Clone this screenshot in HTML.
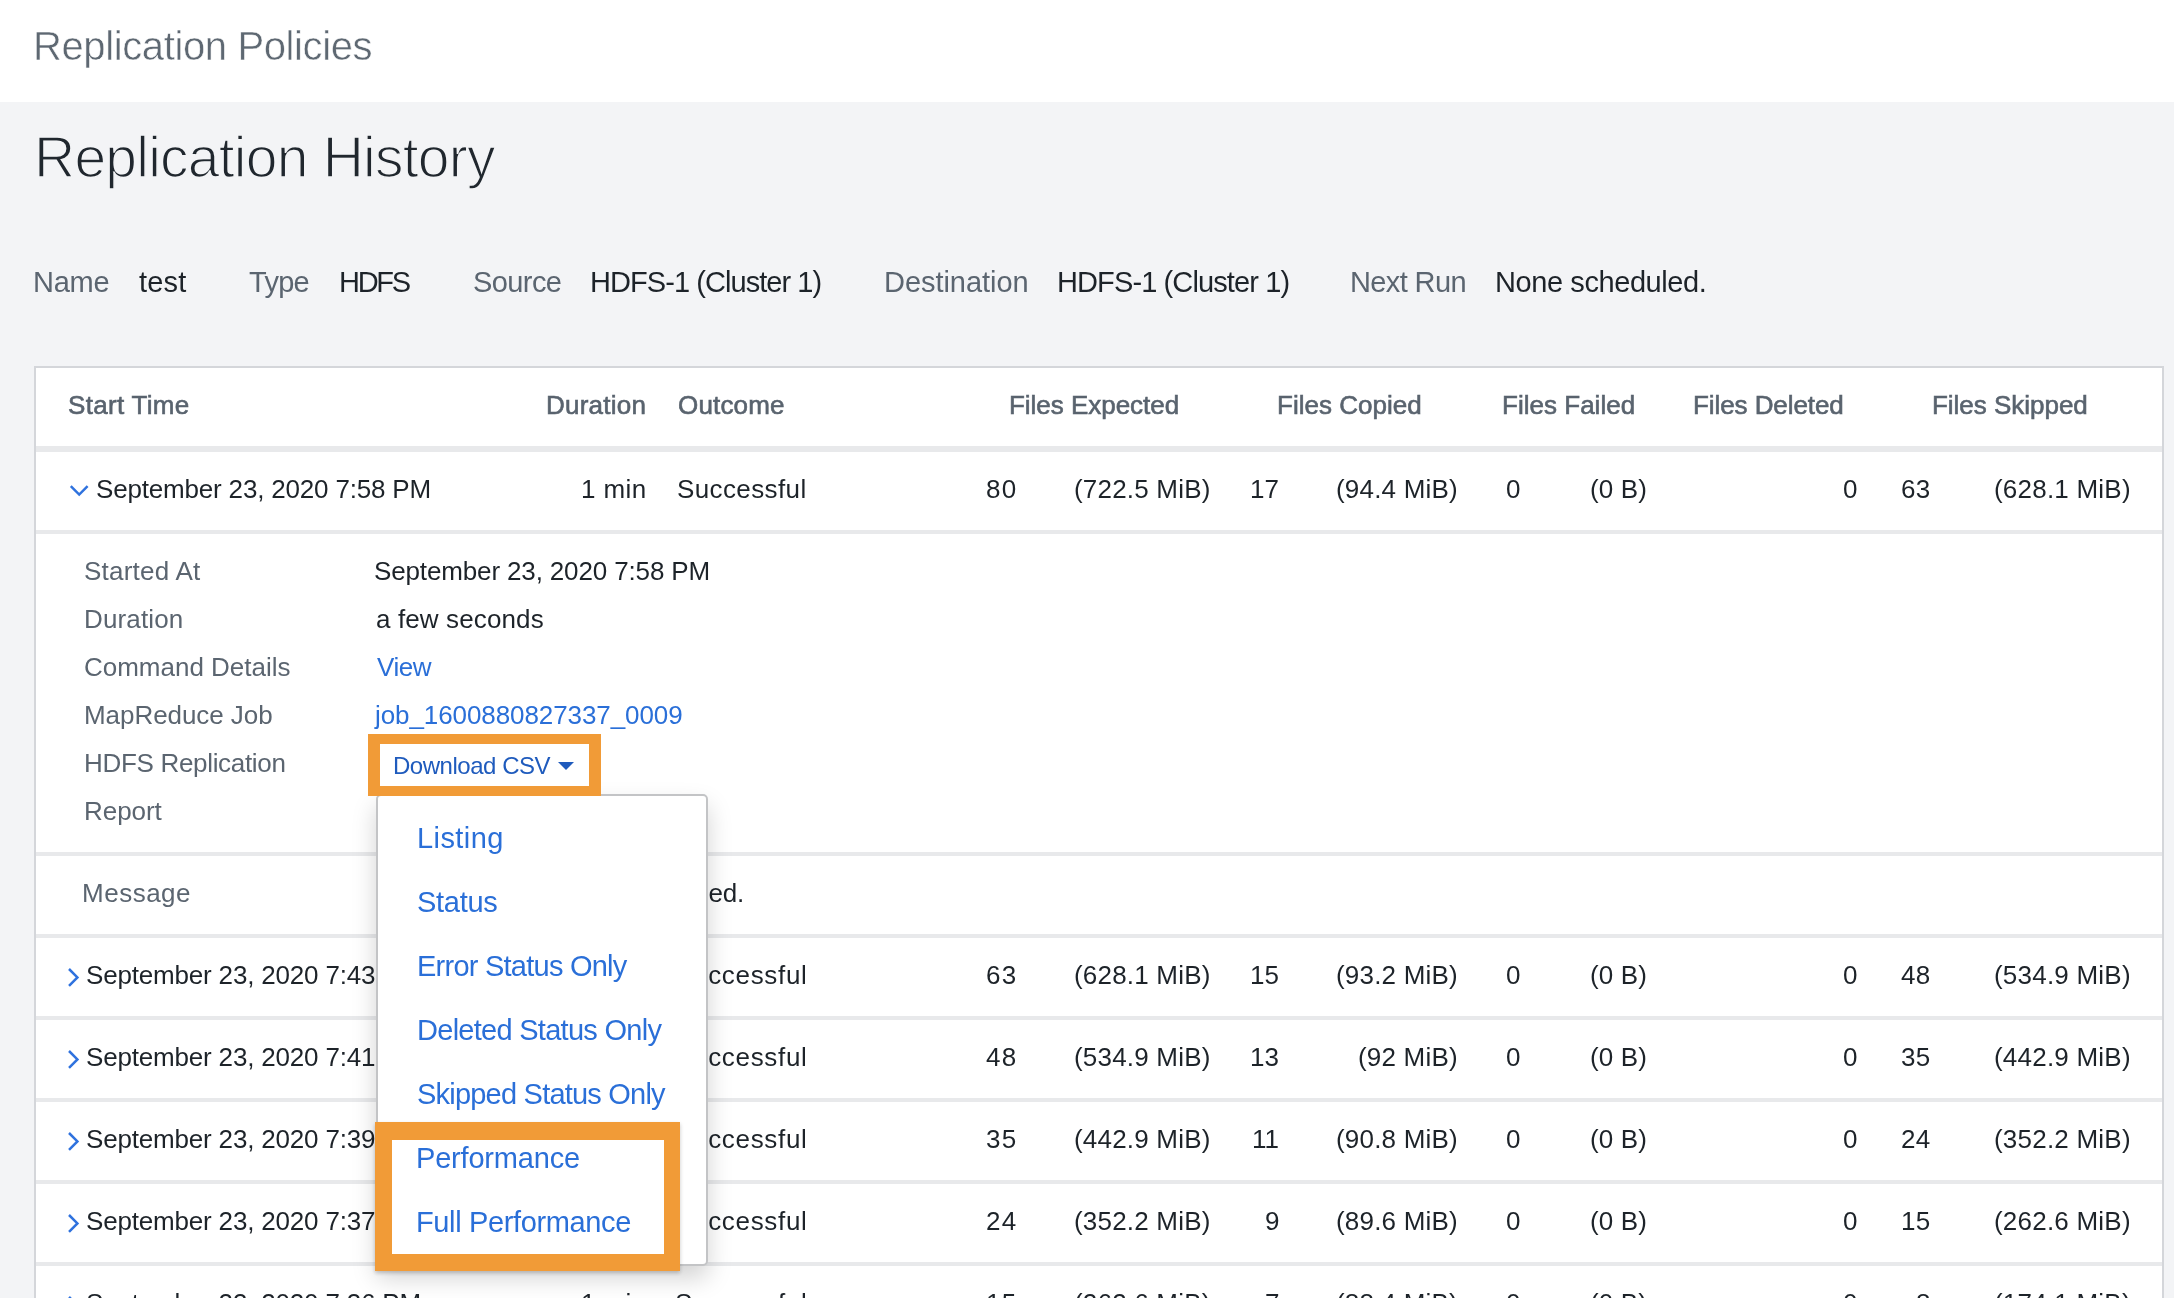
<!DOCTYPE html>
<html><head><meta charset="utf-8"><style>
html,body{margin:0;padding:0;width:2174px;height:1298px;overflow:hidden;background:#f3f4f6;font-family:"Liberation Sans",sans-serif;}
.t{position:absolute;white-space:nowrap;will-change:transform;}
.a{position:absolute;}
</style></head><body>
<div class="a" style="left:0;top:0;width:2174px;height:102px;background:#fff"></div>
<div class="a" style="left:34px;top:366px;width:2126px;height:1000px;background:#fff;border:2px solid #d4d6da;"></div>
<div class="a" style="left:36px;top:446px;width:2126px;height:6px;background:#e8e9eb"></div>
<div class="a" style="left:36px;top:530px;width:2126px;height:4px;background:#e8e9eb"></div>
<div class="a" style="left:36px;top:852px;width:2126px;height:4px;background:#e8e9eb"></div>
<div class="a" style="left:36px;top:934px;width:2126px;height:4px;background:#e8e9eb"></div>
<div class="a" style="left:36px;top:1016px;width:2126px;height:4px;background:#e8e9eb"></div>
<div class="a" style="left:36px;top:1098px;width:2126px;height:4px;background:#e8e9eb"></div>
<div class="a" style="left:36px;top:1180px;width:2126px;height:4px;background:#e8e9eb"></div>
<div class="a" style="left:36px;top:1262px;width:2126px;height:4px;background:#e8e9eb"></div>
<svg class="a" style="left:66px;top:480px" width="26" height="22" viewBox="0 0 26 22"><polyline points="4.8,6.2 13.2,14.6 21.6,6.2" fill="none" stroke="#2f72de" stroke-width="2.5"/></svg>
<svg class="a" style="left:62px;top:964px" width="22" height="26" viewBox="0 0 22 26"><polyline points="7,5 15.4,13.4 7,21.8" fill="none" stroke="#2f72de" stroke-width="2.5"/></svg>
<svg class="a" style="left:62px;top:1046px" width="22" height="26" viewBox="0 0 22 26"><polyline points="7,5 15.4,13.4 7,21.8" fill="none" stroke="#2f72de" stroke-width="2.5"/></svg>
<svg class="a" style="left:62px;top:1128px" width="22" height="26" viewBox="0 0 22 26"><polyline points="7,5 15.4,13.4 7,21.8" fill="none" stroke="#2f72de" stroke-width="2.5"/></svg>
<svg class="a" style="left:62px;top:1210px" width="22" height="26" viewBox="0 0 22 26"><polyline points="7,5 15.4,13.4 7,21.8" fill="none" stroke="#2f72de" stroke-width="2.5"/></svg>
<svg class="a" style="left:62px;top:1292px" width="22" height="26" viewBox="0 0 22 26"><polyline points="7,5 15.4,13.4 7,21.8" fill="none" stroke="#2f72de" stroke-width="2.5"/></svg>

<div class="t" style="left:33.00px;top:26.00px;font-size:40px;line-height:40px;letter-spacing:-0.384px;color:#5e6872;-webkit-text-stroke:0.5px #fff;">Replication Policies</div>
<div class="t" style="left:34.20px;top:128.50px;font-size:57px;line-height:57px;letter-spacing:-0.765px;color:#20272e;-webkit-text-stroke:1.5px #f3f4f6;">Replication History</div>
<div class="t" style="left:32.80px;top:268.30px;font-size:29px;line-height:29px;letter-spacing:-0.248px;color:#5b6570;">Name</div>
<div class="t" style="left:139.10px;top:268.30px;font-size:29px;line-height:29px;letter-spacing:0.183px;color:#1d2329;">test</div>
<div class="t" style="left:249.30px;top:268.30px;font-size:29px;line-height:29px;letter-spacing:-0.725px;color:#5b6570;">Type</div>
<div class="t" style="left:339.40px;top:268.30px;font-size:29px;line-height:29px;letter-spacing:-2.279px;color:#1d2329;">HDFS</div>
<div class="t" style="left:472.70px;top:268.30px;font-size:29px;line-height:29px;letter-spacing:-0.595px;color:#5b6570;">Source</div>
<div class="t" style="left:590.40px;top:268.30px;font-size:29px;line-height:29px;letter-spacing:-0.937px;color:#1d2329;">HDFS-1 (Cluster 1)</div>
<div class="t" style="left:883.70px;top:268.30px;font-size:29px;line-height:29px;letter-spacing:-0.046px;color:#5b6570;">Destination</div>
<div class="t" style="left:1056.60px;top:268.30px;font-size:29px;line-height:29px;letter-spacing:-0.884px;color:#1d2329;">HDFS-1 (Cluster 1)</div>
<div class="t" style="left:1350.20px;top:268.30px;font-size:29px;line-height:29px;letter-spacing:-0.625px;color:#5b6570;">Next Run</div>
<div class="t" style="left:1494.90px;top:268.30px;font-size:29px;line-height:29px;letter-spacing:-0.416px;color:#1d2329;">None scheduled.</div>
<div class="t" style="left:68.20px;top:392.30px;font-size:26px;line-height:26px;letter-spacing:0.307px;color:#59636e;-webkit-text-stroke:0.6px #59636e;">Start Time</div>
<div class="t" style="left:546.40px;top:392.30px;font-size:26px;line-height:26px;letter-spacing:0.236px;color:#59636e;-webkit-text-stroke:0.6px #59636e;">Duration</div>
<div class="t" style="left:677.70px;top:392.30px;font-size:26px;line-height:26px;letter-spacing:0.174px;color:#59636e;-webkit-text-stroke:0.6px #59636e;">Outcome</div>
<div class="t" style="left:1008.60px;top:392.30px;font-size:26px;line-height:26px;letter-spacing:-0.030px;color:#59636e;-webkit-text-stroke:0.6px #59636e;">Files Expected</div>
<div class="t" style="left:1277.30px;top:392.30px;font-size:26px;line-height:26px;letter-spacing:0.020px;color:#59636e;-webkit-text-stroke:0.6px #59636e;">Files Copied</div>
<div class="t" style="left:1501.80px;top:392.30px;font-size:26px;line-height:26px;letter-spacing:0.018px;color:#59636e;-webkit-text-stroke:0.6px #59636e;">Files Failed</div>
<div class="t" style="left:1692.70px;top:392.30px;font-size:26px;line-height:26px;letter-spacing:-0.075px;color:#59636e;-webkit-text-stroke:0.6px #59636e;">Files Deleted</div>
<div class="t" style="left:1932.30px;top:392.30px;font-size:26px;line-height:26px;letter-spacing:-0.021px;color:#59636e;-webkit-text-stroke:0.6px #59636e;">Files Skipped</div>
<div class="t" style="left:95.52px;top:476.00px;font-size:26px;line-height:26px;letter-spacing:-0.180px;color:#1d2329;">September 23, 2020 7:58 PM</div>
<div class="t" style="left:581.10px;top:476.00px;font-size:26px;line-height:26px;letter-spacing:0.409px;color:#1d2329;">1 min</div>
<div class="t" style="left:676.80px;top:476.00px;font-size:26px;line-height:26px;letter-spacing:0.389px;color:#1d2329;">Successful</div>
<div class="t" style="left:986.40px;top:476.00px;font-size:26px;line-height:26px;letter-spacing:1.294px;color:#1d2329;">80</div>
<div class="t" style="left:1073.70px;top:476.00px;font-size:26px;line-height:26px;letter-spacing:0.196px;color:#1d2329;">(722.5 MiB)</div>
<div class="t" style="left:1250.20px;top:476.00px;font-size:26px;line-height:26px;letter-spacing:0.094px;color:#1d2329;">17</div>
<div class="t" style="left:1336.30px;top:476.00px;font-size:26px;line-height:26px;letter-spacing:0.201px;color:#1d2329;">(94.4 MiB)</div>
<div class="t" style="left:1506.40px;top:476.00px;font-size:26px;line-height:26px;letter-spacing:0.000px;color:#1d2329;">0</div>
<div class="t" style="left:1589.60px;top:476.00px;font-size:26px;line-height:26px;letter-spacing:0.168px;color:#1d2329;">(0 B)</div>
<div class="t" style="left:1843.40px;top:476.00px;font-size:26px;line-height:26px;letter-spacing:0.000px;color:#1d2329;">0</div>
<div class="t" style="left:1901.20px;top:476.00px;font-size:26px;line-height:26px;letter-spacing:0.294px;color:#1d2329;">63</div>
<div class="t" style="left:1993.90px;top:476.00px;font-size:26px;line-height:26px;letter-spacing:0.216px;color:#1d2329;">(628.1 MiB)</div>
<div class="t" style="left:85.62px;top:962.00px;font-size:26px;line-height:26px;letter-spacing:-0.180px;color:#1d2329;">September 23, 2020 7:43 PM</div>
<div class="t" style="left:581.10px;top:962.00px;font-size:26px;line-height:26px;letter-spacing:0.409px;color:#1d2329;">1 min</div>
<div class="t" style="left:674.53px;top:962.00px;font-size:26px;line-height:26px;letter-spacing:0.675px;color:#1d2329;">Successful</div>
<div class="t" style="left:986.40px;top:962.00px;font-size:26px;line-height:26px;letter-spacing:1.294px;color:#1d2329;">63</div>
<div class="t" style="left:1073.70px;top:962.00px;font-size:26px;line-height:26px;letter-spacing:0.196px;color:#1d2329;">(628.1 MiB)</div>
<div class="t" style="left:1250.20px;top:962.00px;font-size:26px;line-height:26px;letter-spacing:0.094px;color:#1d2329;">15</div>
<div class="t" style="left:1336.30px;top:962.00px;font-size:26px;line-height:26px;letter-spacing:0.201px;color:#1d2329;">(93.2 MiB)</div>
<div class="t" style="left:1506.40px;top:962.00px;font-size:26px;line-height:26px;letter-spacing:0.000px;color:#1d2329;">0</div>
<div class="t" style="left:1589.60px;top:962.00px;font-size:26px;line-height:26px;letter-spacing:0.168px;color:#1d2329;">(0 B)</div>
<div class="t" style="left:1843.40px;top:962.00px;font-size:26px;line-height:26px;letter-spacing:0.000px;color:#1d2329;">0</div>
<div class="t" style="left:1901.20px;top:962.00px;font-size:26px;line-height:26px;letter-spacing:0.294px;color:#1d2329;">48</div>
<div class="t" style="left:1993.90px;top:962.00px;font-size:26px;line-height:26px;letter-spacing:0.216px;color:#1d2329;">(534.9 MiB)</div>
<div class="t" style="left:85.62px;top:1044.00px;font-size:26px;line-height:26px;letter-spacing:-0.180px;color:#1d2329;">September 23, 2020 7:41 PM</div>
<div class="t" style="left:581.10px;top:1044.00px;font-size:26px;line-height:26px;letter-spacing:0.409px;color:#1d2329;">1 min</div>
<div class="t" style="left:674.53px;top:1044.00px;font-size:26px;line-height:26px;letter-spacing:0.675px;color:#1d2329;">Successful</div>
<div class="t" style="left:986.40px;top:1044.00px;font-size:26px;line-height:26px;letter-spacing:1.294px;color:#1d2329;">48</div>
<div class="t" style="left:1073.70px;top:1044.00px;font-size:26px;line-height:26px;letter-spacing:0.196px;color:#1d2329;">(534.9 MiB)</div>
<div class="t" style="left:1250.20px;top:1044.00px;font-size:26px;line-height:26px;letter-spacing:0.094px;color:#1d2329;">13</div>
<div class="t" style="left:1358.37px;top:1044.00px;font-size:26px;line-height:26px;letter-spacing:0.201px;color:#1d2329;">(92 MiB)</div>
<div class="t" style="left:1506.40px;top:1044.00px;font-size:26px;line-height:26px;letter-spacing:0.000px;color:#1d2329;">0</div>
<div class="t" style="left:1589.60px;top:1044.00px;font-size:26px;line-height:26px;letter-spacing:0.168px;color:#1d2329;">(0 B)</div>
<div class="t" style="left:1843.40px;top:1044.00px;font-size:26px;line-height:26px;letter-spacing:0.000px;color:#1d2329;">0</div>
<div class="t" style="left:1901.20px;top:1044.00px;font-size:26px;line-height:26px;letter-spacing:0.294px;color:#1d2329;">35</div>
<div class="t" style="left:1993.90px;top:1044.00px;font-size:26px;line-height:26px;letter-spacing:0.216px;color:#1d2329;">(442.9 MiB)</div>
<div class="t" style="left:85.62px;top:1126.00px;font-size:26px;line-height:26px;letter-spacing:-0.180px;color:#1d2329;">September 23, 2020 7:39 PM</div>
<div class="t" style="left:581.10px;top:1126.00px;font-size:26px;line-height:26px;letter-spacing:0.409px;color:#1d2329;">1 min</div>
<div class="t" style="left:674.53px;top:1126.00px;font-size:26px;line-height:26px;letter-spacing:0.675px;color:#1d2329;">Successful</div>
<div class="t" style="left:986.40px;top:1126.00px;font-size:26px;line-height:26px;letter-spacing:1.294px;color:#1d2329;">35</div>
<div class="t" style="left:1073.70px;top:1126.00px;font-size:26px;line-height:26px;letter-spacing:0.196px;color:#1d2329;">(442.9 MiB)</div>
<div class="t" style="left:1252.12px;top:1126.00px;font-size:26px;line-height:26px;letter-spacing:0.094px;color:#1d2329;">11</div>
<div class="t" style="left:1336.30px;top:1126.00px;font-size:26px;line-height:26px;letter-spacing:0.201px;color:#1d2329;">(90.8 MiB)</div>
<div class="t" style="left:1506.40px;top:1126.00px;font-size:26px;line-height:26px;letter-spacing:0.000px;color:#1d2329;">0</div>
<div class="t" style="left:1589.60px;top:1126.00px;font-size:26px;line-height:26px;letter-spacing:0.168px;color:#1d2329;">(0 B)</div>
<div class="t" style="left:1843.40px;top:1126.00px;font-size:26px;line-height:26px;letter-spacing:0.000px;color:#1d2329;">0</div>
<div class="t" style="left:1901.20px;top:1126.00px;font-size:26px;line-height:26px;letter-spacing:0.294px;color:#1d2329;">24</div>
<div class="t" style="left:1993.90px;top:1126.00px;font-size:26px;line-height:26px;letter-spacing:0.216px;color:#1d2329;">(352.2 MiB)</div>
<div class="t" style="left:85.62px;top:1208.00px;font-size:26px;line-height:26px;letter-spacing:-0.180px;color:#1d2329;">September 23, 2020 7:37 PM</div>
<div class="t" style="left:581.10px;top:1208.00px;font-size:26px;line-height:26px;letter-spacing:0.409px;color:#1d2329;">1 min</div>
<div class="t" style="left:674.53px;top:1208.00px;font-size:26px;line-height:26px;letter-spacing:0.675px;color:#1d2329;">Successful</div>
<div class="t" style="left:986.40px;top:1208.00px;font-size:26px;line-height:26px;letter-spacing:1.294px;color:#1d2329;">24</div>
<div class="t" style="left:1073.70px;top:1208.00px;font-size:26px;line-height:26px;letter-spacing:0.196px;color:#1d2329;">(352.2 MiB)</div>
<div class="t" style="left:1264.75px;top:1208.00px;font-size:26px;line-height:26px;letter-spacing:0.094px;color:#1d2329;">9</div>
<div class="t" style="left:1336.30px;top:1208.00px;font-size:26px;line-height:26px;letter-spacing:0.201px;color:#1d2329;">(89.6 MiB)</div>
<div class="t" style="left:1506.40px;top:1208.00px;font-size:26px;line-height:26px;letter-spacing:0.000px;color:#1d2329;">0</div>
<div class="t" style="left:1589.60px;top:1208.00px;font-size:26px;line-height:26px;letter-spacing:0.168px;color:#1d2329;">(0 B)</div>
<div class="t" style="left:1843.40px;top:1208.00px;font-size:26px;line-height:26px;letter-spacing:0.000px;color:#1d2329;">0</div>
<div class="t" style="left:1901.20px;top:1208.00px;font-size:26px;line-height:26px;letter-spacing:0.294px;color:#1d2329;">15</div>
<div class="t" style="left:1993.90px;top:1208.00px;font-size:26px;line-height:26px;letter-spacing:0.216px;color:#1d2329;">(262.6 MiB)</div>
<div class="t" style="left:85.62px;top:1290.00px;font-size:26px;line-height:26px;letter-spacing:-0.180px;color:#1d2329;">September 23, 2020 7:36 PM</div>
<div class="t" style="left:581.10px;top:1290.00px;font-size:26px;line-height:26px;letter-spacing:0.409px;color:#1d2329;">1 min</div>
<div class="t" style="left:674.53px;top:1290.00px;font-size:26px;line-height:26px;letter-spacing:0.675px;color:#1d2329;">Successful</div>
<div class="t" style="left:986.40px;top:1290.00px;font-size:26px;line-height:26px;letter-spacing:1.294px;color:#1d2329;">15</div>
<div class="t" style="left:1073.70px;top:1290.00px;font-size:26px;line-height:26px;letter-spacing:0.196px;color:#1d2329;">(262.6 MiB)</div>
<div class="t" style="left:1264.75px;top:1290.00px;font-size:26px;line-height:26px;letter-spacing:0.094px;color:#1d2329;">7</div>
<div class="t" style="left:1336.30px;top:1290.00px;font-size:26px;line-height:26px;letter-spacing:0.201px;color:#1d2329;">(88.4 MiB)</div>
<div class="t" style="left:1506.40px;top:1290.00px;font-size:26px;line-height:26px;letter-spacing:0.000px;color:#1d2329;">0</div>
<div class="t" style="left:1589.60px;top:1290.00px;font-size:26px;line-height:26px;letter-spacing:0.168px;color:#1d2329;">(0 B)</div>
<div class="t" style="left:1843.40px;top:1290.00px;font-size:26px;line-height:26px;letter-spacing:0.000px;color:#1d2329;">0</div>
<div class="t" style="left:1915.95px;top:1290.00px;font-size:26px;line-height:26px;letter-spacing:0.294px;color:#1d2329;">8</div>
<div class="t" style="left:1993.90px;top:1290.00px;font-size:26px;line-height:26px;letter-spacing:0.216px;color:#1d2329;">(174.1 MiB)</div>
<div class="t" style="left:83.60px;top:557.70px;font-size:26px;line-height:26px;letter-spacing:0.229px;color:#5b6570;">Started At</div>
<div class="t" style="left:83.60px;top:605.70px;font-size:26px;line-height:26px;letter-spacing:0.136px;color:#5b6570;">Duration</div>
<div class="t" style="left:83.60px;top:653.70px;font-size:26px;line-height:26px;letter-spacing:-0.007px;color:#5b6570;">Command Details</div>
<div class="t" style="left:83.60px;top:701.70px;font-size:26px;line-height:26px;letter-spacing:-0.057px;color:#5b6570;">MapReduce Job</div>
<div class="t" style="left:83.60px;top:749.70px;font-size:26px;line-height:26px;letter-spacing:-0.314px;color:#5b6570;">HDFS Replication</div>
<div class="t" style="left:83.60px;top:797.70px;font-size:26px;line-height:26px;letter-spacing:-0.043px;color:#5b6570;">Report</div>
<div class="t" style="left:374.20px;top:558.10px;font-size:26px;line-height:26px;letter-spacing:-0.141px;color:#1d2329;">September 23, 2020 7:58 PM</div>
<div class="t" style="left:376.20px;top:605.60px;font-size:26px;line-height:26px;letter-spacing:0.120px;color:#1d2329;">a few seconds</div>
<div class="t" style="left:376.60px;top:653.80px;font-size:26px;line-height:26px;letter-spacing:-0.430px;color:#2a6fd8;">View</div>
<div class="t" style="left:375.30px;top:701.90px;font-size:26px;line-height:26px;letter-spacing:-0.086px;color:#2a6fd8;">job_1600880827337_0009</div>
<div class="t" style="left:82.20px;top:880.00px;font-size:26px;line-height:26px;letter-spacing:0.505px;color:#5b6570;">Message</div>
<div class="a" style="left:376px;top:870px;width:367px;height:44px;overflow:hidden"><div class="t" style="right:-0.7px;top:10px;font-size:26px;line-height:26px;color:#1d2329;letter-spacing:-0.3px">Replication of files unchanged.</div></div>
<div class="a" style="left:376px;top:794px;width:328px;height:468px;background:#fff;border:2px solid #c3c4c6;border-radius:5px;box-shadow:0 12px 24px rgba(0,0,0,.175)"></div>
<div class="a" style="left:368px;top:734px;width:209px;height:42px;border-style:solid;border-color:#f19b37;border-width:10px 12px;background:#fff"></div>
<div class="t" style="left:393.48px;top:754.00px;font-size:24px;line-height:24px;letter-spacing:-0.474px;color:#1f5bbd;">Download CSV</div>
<svg class="a" style="left:558px;top:762px" width="16" height="8" viewBox="0 0 16 8"><polygon points="0,0 16,0 8,8" fill="#1f5bbd"/></svg>
<div class="a" style="left:375px;top:1122px;width:272px;height:114px;border-style:solid;border-color:#f19b37;border-width:18px 16px 17px 17px;background:#fff;box-shadow:0 2px 4px rgba(0,0,0,.22)"></div>
<div class="t" style="left:416.50px;top:824.00px;font-size:29px;line-height:29px;letter-spacing:0.415px;color:#2a6fd8;">Listing</div>
<div class="t" style="left:417.30px;top:888.00px;font-size:29px;line-height:29px;letter-spacing:-0.284px;color:#2a6fd8;">Status</div>
<div class="t" style="left:416.50px;top:952.00px;font-size:29px;line-height:29px;letter-spacing:-0.757px;color:#2a6fd8;">Error Status Only</div>
<div class="t" style="left:416.50px;top:1016.00px;font-size:29px;line-height:29px;letter-spacing:-0.723px;color:#2a6fd8;">Deleted Status Only</div>
<div class="t" style="left:417.30px;top:1080.00px;font-size:29px;line-height:29px;letter-spacing:-0.786px;color:#2a6fd8;">Skipped Status Only</div>
<div class="t" style="left:416.34px;top:1144.00px;font-size:29px;line-height:29px;letter-spacing:-0.192px;color:#2a6fd8;">Performance</div>
<div class="t" style="left:416.34px;top:1208.00px;font-size:29px;line-height:29px;letter-spacing:-0.368px;color:#2a6fd8;">Full Performance</div>
</body></html>
